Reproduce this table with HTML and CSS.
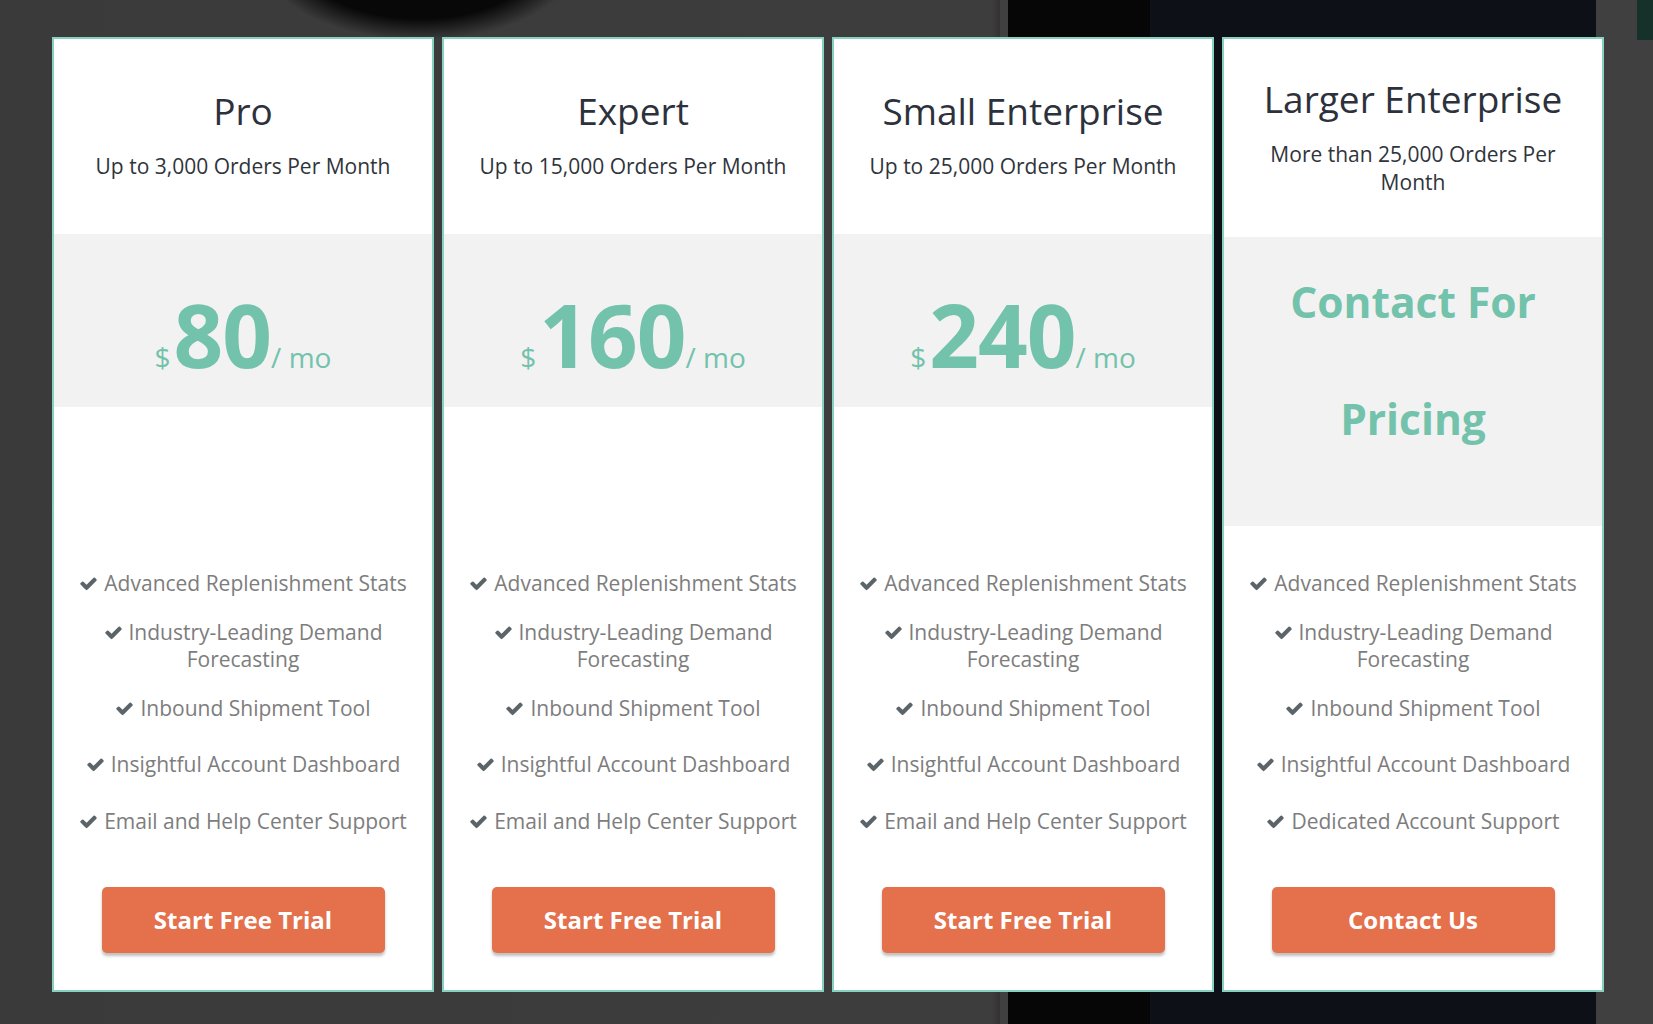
FILE: index.html
```html
<!DOCTYPE html>
<html lang="en">
<head>
    <meta charset="UTF-8">
    <meta name="viewport" content="width=device-width, initial-scale=1.0">
    <title>Pricing</title>
    <link rel="stylesheet" href="styles.css">
</head>
<body>
    <div class="plans">
        <div class="plan">
            <div class="plan-top">
                <div class="plan-head">
                    <h2>Pro</h2>
                    <p>Up to 3,000 Orders Per Month</p>
                </div>
                <div class="plan-price">
                    <span class="cur">$</span><span class="amount">80</span><span class="per">/ mo</span>
                </div>
            </div>
            <ul class="features">
                <li><svg class="check" viewBox="0 0 1792 1792"><path d="M1671 566q0 40-28 68l-724 724-136 136q-28 28-68 28t-68-28l-136-136-362-362q-28-28-28-68t28-68l136-136q28-28 68-28t68 28l294 295 656-657q28-28 68-28t68 28l136 136q28 28 28 68z"/></svg>Advanced Replenishment Stats</li>
                <li><svg class="check" viewBox="0 0 1792 1792"><path d="M1671 566q0 40-28 68l-724 724-136 136q-28 28-68 28t-68-28l-136-136-362-362q-28-28-28-68t28-68l136-136q28-28 68-28t68 28l294 295 656-657q28-28 68-28t68 28l136 136q28 28 28 68z"/></svg>Industry-Leading Demand Forecasting</li>
                <li><svg class="check" viewBox="0 0 1792 1792"><path d="M1671 566q0 40-28 68l-724 724-136 136q-28 28-68 28t-68-28l-136-136-362-362q-28-28-28-68t28-68l136-136q28-28 68-28t68 28l294 295 656-657q28-28 68-28t68 28l136 136q28 28 28 68z"/></svg>Inbound Shipment Tool</li>
                <li><svg class="check" viewBox="0 0 1792 1792"><path d="M1671 566q0 40-28 68l-724 724-136 136q-28 28-68 28t-68-28l-136-136-362-362q-28-28-28-68t28-68l136-136q28-28 68-28t68 28l294 295 656-657q28-28 68-28t68 28l136 136q28 28 28 68z"/></svg>Insightful Account Dashboard</li>
                <li><svg class="check" viewBox="0 0 1792 1792"><path d="M1671 566q0 40-28 68l-724 724-136 136q-28 28-68 28t-68-28l-136-136-362-362q-28-28-28-68t28-68l136-136q28-28 68-28t68 28l294 295 656-657q28-28 68-28t68 28l136 136q28 28 28 68z"/></svg>Email and Help Center Support</li>
            </ul>
            <a class="btn" href="#">Start Free Trial</a>
        </div>

        <div class="plan">
            <div class="plan-top">
                <div class="plan-head">
                    <h2>Expert</h2>
                    <p>Up to 15,000 Orders Per Month</p>
                </div>
                <div class="plan-price">
                    <span class="cur">$</span><span class="amount">160</span><span class="per">/ mo</span>
                </div>
            </div>
            <ul class="features">
                <li><svg class="check" viewBox="0 0 1792 1792"><path d="M1671 566q0 40-28 68l-724 724-136 136q-28 28-68 28t-68-28l-136-136-362-362q-28-28-28-68t28-68l136-136q28-28 68-28t68 28l294 295 656-657q28-28 68-28t68 28l136 136q28 28 28 68z"/></svg>Advanced Replenishment Stats</li>
                <li><svg class="check" viewBox="0 0 1792 1792"><path d="M1671 566q0 40-28 68l-724 724-136 136q-28 28-68 28t-68-28l-136-136-362-362q-28-28-28-68t28-68l136-136q28-28 68-28t68 28l294 295 656-657q28-28 68-28t68 28l136 136q28 28 28 68z"/></svg>Industry-Leading Demand Forecasting</li>
                <li><svg class="check" viewBox="0 0 1792 1792"><path d="M1671 566q0 40-28 68l-724 724-136 136q-28 28-68 28t-68-28l-136-136-362-362q-28-28-28-68t28-68l136-136q28-28 68-28t68 28l294 295 656-657q28-28 68-28t68 28l136 136q28 28 28 68z"/></svg>Inbound Shipment Tool</li>
                <li><svg class="check" viewBox="0 0 1792 1792"><path d="M1671 566q0 40-28 68l-724 724-136 136q-28 28-68 28t-68-28l-136-136-362-362q-28-28-28-68t28-68l136-136q28-28 68-28t68 28l294 295 656-657q28-28 68-28t68 28l136 136q28 28 28 68z"/></svg>Insightful Account Dashboard</li>
                <li><svg class="check" viewBox="0 0 1792 1792"><path d="M1671 566q0 40-28 68l-724 724-136 136q-28 28-68 28t-68-28l-136-136-362-362q-28-28-28-68t28-68l136-136q28-28 68-28t68 28l294 295 656-657q28-28 68-28t68 28l136 136q28 28 28 68z"/></svg>Email and Help Center Support</li>
            </ul>
            <a class="btn" href="#">Start Free Trial</a>
        </div>

        <div class="plan">
            <div class="plan-top">
                <div class="plan-head">
                    <h2>Small Enterprise</h2>
                    <p>Up to 25,000 Orders Per Month</p>
                </div>
                <div class="plan-price">
                    <span class="cur">$</span><span class="amount">240</span><span class="per">/ mo</span>
                </div>
            </div>
            <ul class="features">
                <li><svg class="check" viewBox="0 0 1792 1792"><path d="M1671 566q0 40-28 68l-724 724-136 136q-28 28-68 28t-68-28l-136-136-362-362q-28-28-28-68t28-68l136-136q28-28 68-28t68 28l294 295 656-657q28-28 68-28t68 28l136 136q28 28 28 68z"/></svg>Advanced Replenishment Stats</li>
                <li><svg class="check" viewBox="0 0 1792 1792"><path d="M1671 566q0 40-28 68l-724 724-136 136q-28 28-68 28t-68-28l-136-136-362-362q-28-28-28-68t28-68l136-136q28-28 68-28t68 28l294 295 656-657q28-28 68-28t68 28l136 136q28 28 28 68z"/></svg>Industry-Leading Demand Forecasting</li>
                <li><svg class="check" viewBox="0 0 1792 1792"><path d="M1671 566q0 40-28 68l-724 724-136 136q-28 28-68 28t-68-28l-136-136-362-362q-28-28-28-68t28-68l136-136q28-28 68-28t68 28l294 295 656-657q28-28 68-28t68 28l136 136q28 28 28 68z"/></svg>Inbound Shipment Tool</li>
                <li><svg class="check" viewBox="0 0 1792 1792"><path d="M1671 566q0 40-28 68l-724 724-136 136q-28 28-68 28t-68-28l-136-136-362-362q-28-28-28-68t28-68l136-136q28-28 68-28t68 28l294 295 656-657q28-28 68-28t68 28l136 136q28 28 28 68z"/></svg>Insightful Account Dashboard</li>
                <li><svg class="check" viewBox="0 0 1792 1792"><path d="M1671 566q0 40-28 68l-724 724-136 136q-28 28-68 28t-68-28l-136-136-362-362q-28-28-28-68t28-68l136-136q28-28 68-28t68 28l294 295 656-657q28-28 68-28t68 28l136 136q28 28 28 68z"/></svg>Email and Help Center Support</li>
            </ul>
            <a class="btn" href="#">Start Free Trial</a>
        </div>

        <div class="plan">
            <div class="plan-top">
                <div class="plan-head">
                    <h2>Larger Enterprise</h2>
                    <p>More than 25,000 Orders Per Month</p>
                </div>
                <div class="plan-price contact">
                    <span class="contact-text">Contact For Pricing</span>
                </div>
            </div>
            <ul class="features">
                <li><svg class="check" viewBox="0 0 1792 1792"><path d="M1671 566q0 40-28 68l-724 724-136 136q-28 28-68 28t-68-28l-136-136-362-362q-28-28-28-68t28-68l136-136q28-28 68-28t68 28l294 295 656-657q28-28 68-28t68 28l136 136q28 28 28 68z"/></svg>Advanced Replenishment Stats</li>
                <li><svg class="check" viewBox="0 0 1792 1792"><path d="M1671 566q0 40-28 68l-724 724-136 136q-28 28-68 28t-68-28l-136-136-362-362q-28-28-28-68t28-68l136-136q28-28 68-28t68 28l294 295 656-657q28-28 68-28t68 28l136 136q28 28 28 68z"/></svg>Industry-Leading Demand Forecasting</li>
                <li><svg class="check" viewBox="0 0 1792 1792"><path d="M1671 566q0 40-28 68l-724 724-136 136q-28 28-68 28t-68-28l-136-136-362-362q-28-28-28-68t28-68l136-136q28-28 68-28t68 28l294 295 656-657q28-28 68-28t68 28l136 136q28 28 28 68z"/></svg>Inbound Shipment Tool</li>
                <li><svg class="check" viewBox="0 0 1792 1792"><path d="M1671 566q0 40-28 68l-724 724-136 136q-28 28-68 28t-68-28l-136-136-362-362q-28-28-28-68t28-68l136-136q28-28 68-28t68 28l294 295 656-657q28-28 68-28t68 28l136 136q28 28 28 68z"/></svg>Insightful Account Dashboard</li>
                <li><svg class="check" viewBox="0 0 1792 1792"><path d="M1671 566q0 40-28 68l-724 724-136 136q-28 28-68 28t-68-28l-136-136-362-362q-28-28-28-68t28-68l136-136q28-28 68-28t68 28l294 295 656-657q28-28 68-28t68 28l136 136q28 28 28 68z"/></svg>Dedicated Account Support</li>
            </ul>
            <a class="btn" href="#">Contact Us</a>
        </div>
    </div>
</body>
</html>
```

FILE: styles.css
```css
body {
    margin: 0;
    height: 1024px;
    overflow: hidden;
    font-family: "Open Sans", Arial, sans-serif;
    background:
        linear-gradient(#16302a, #16302a) 1637px 0 / 16px 40px no-repeat,
        radial-gradient(ellipse 160px 85px at 420px -45px, #080808 75%, rgba(8, 8, 8, 0) 100%),
        linear-gradient(to right, transparent 1008px, #060606 1008px, #060606 1150px, #0d1016 1150px, #0d1016 1596px, transparent 1596px),
        linear-gradient(to right, #3a3a3a, #3d3d3d 60%, #353130 1000px, #404040 1000px);
}

.plans {
    display: grid;
    grid-template-columns: repeat(4, 382px);
    gap: 8px;
    padding: 37px 0 0 52px;
}

.plan {
    box-sizing: border-box;
    height: 955px;
    display: flex;
    flex-direction: column;
    background: #fff;
    border: 2px solid #86d1bf;
    padding-bottom: 37px;
}

.plan-top {
    min-height: 488px;
}

.plan-head {
    box-sizing: border-box;
    min-height: 195px;
    padding: 37px 24px 41px;
    display: flex;
    flex-direction: column;
    justify-content: center;
    text-align: center;
}

.plan-head h2 {
    margin: 0;
    font-size: 37px;
    font-weight: 400;
    line-height: 45px;
    color: #2c313b;
}

.plan-head p {
    margin: 20px 0 0;
    font-size: 21px;
    line-height: 27.5px;
    color: #30343b;
}

.plan-price {
    box-sizing: border-box;
    height: 173px;
    padding-top: 57px;
    background: #f2f2f2;
    color: #73c2ab;
    display: flex;
    justify-content: center;
    align-items: baseline;
    line-height: 1;
}

.cur {
    font-size: 28px;
    margin-right: 3px;
}

.amount {
    font-size: 87px;
    font-weight: 700;
    letter-spacing: -1px;
}

.per {
    font-size: 28px;
}

.plan-price.contact {
    display: block;
    height: auto;
    padding: 6px 20px 49px;
    text-align: center;
}

.contact-text {
    display: block;
    font-size: 42.5px;
    font-weight: 700;
    line-height: 117px;
}

.features {
    list-style: none;
    margin: 0;
    padding: 43px 16px 0;
    text-align: center;
    font-size: 21px;
    line-height: 27.5px;
    color: #7d7d7d;
}

.features li + li {
    margin-top: 21px;
}

.features li:nth-child(n+4) {
    margin-top: 29px;
}

.check {
    width: 19px;
    height: 19px;
    fill: #5b6569;
    margin-right: 6px;
    vertical-align: -2px;
}

.btn {
    display: block;
    width: 283px;
    height: 66px;
    margin: auto auto 0;
    border-radius: 5px;
    background: #e5704c;
    box-shadow: 0 3px 3px rgba(0, 0, 0, 0.25);
    color: #fff;
    font-size: 24px;
    font-weight: 700;
    line-height: 66px;
    text-align: center;
    text-decoration: none;
}
```
